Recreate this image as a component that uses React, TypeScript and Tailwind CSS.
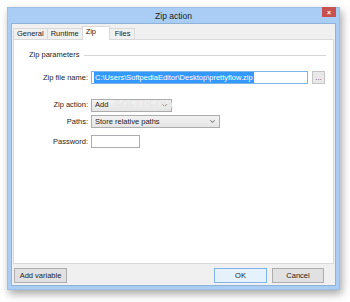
import { ChevronDown } from "lucide-react";

const font = { fontFamily: '"Liberation Sans", Arial, sans-serif' };

function Tab({ label, active }: { label: string; active?: boolean }) {
  if (active) {
    return (
      <div className="h-[14px] -mb-px w-[28px] bg-white border border-b-0 border-[#d9d9d9] z-10 flex items-start pl-[3px] pt-[1px]">
        {label}
      </div>
    );
  }
  return (
    <div className="h-[11px] bg-[#f0f0f0] border border-b-0 border-[#d9d9d9] flex items-center px-[3px] -mr-px">
      {label}
    </div>
  );
}

function Select({ value, width }: { value: string; width: string }) {
  return (
    <div
      className={`${width} h-[13px] border border-[#acacac] bg-gradient-to-b from-[#f2f2f2] to-[#e5e5e5] flex items-center justify-between pl-[3px] pr-[3px]`}
    >
      <span>{value}</span>
      <ChevronDown size={7} strokeWidth={3} className="text-[#444]" />
    </div>
  );
}

export default function App() {
  return (
    <div
      className="w-[350px] h-[302px] bg-white pl-[7px] pt-[7px] text-[7.5px] text-[#1e1e1e] leading-none"
      style={font}
    >
      <div className="w-[333px] h-[283px] bg-[#a9cdf4] border border-[#9cbfe6] shadow-[2px_4px_8px_rgba(0,0,0,0.35)] flex flex-col">
        {/* title bar */}
        <div className="h-[15px] relative flex items-center justify-center">
          <span className="text-[8.5px] text-[#1a1a1a] mt-[2px]">Zip action</span>
          <div className="absolute right-[3px] top-[-1px] w-[14px] h-[10px] bg-[#c75050] flex items-center justify-center text-white text-[7px] font-bold">
            ×
          </div>
        </div>

        <div className="flex-1 mx-[3px] mb-[3px] bg-[#f0f0f0] border border-[#8fb2d9] flex flex-col">
          {/* tabs */}
          <div className="flex items-end h-[14px] mt-px ml-px">
            <Tab label="General" />
            <Tab label="Runtime" />
            <Tab label="Zip" active />
            <div className="h-[11px] bg-[#f0f0f0] border border-b-0 border-[#d9d9d9] flex items-center pl-[5px] w-[26px] -ml-px">
              Files
            </div>
          </div>

          {/* panel */}
          <div className="ml-px w-[321px] h-[225px] bg-white border border-[#d9d9d9] pt-[10px] relative">
            <div className="flex items-center pl-[15px] pr-[7px] h-[10px]">
              <span>Zip parameters</span>
              <div className="flex-1 h-px bg-[#d5d5d5] ml-[5px]" />
            </div>

            <div className="flex items-center mt-[11px] h-[13px]">
              <div className="w-[74px] text-right">Zip file name:</div>
              <div className="ml-[3px] w-[217px] h-[13px] border border-[#7eb4ea] bg-white flex items-center pl-[2px]">
                <span className="bg-[#3399ff] text-white px-px py-[2px]">
                  C:\Users\SoftpediaEditor\Desktop\prettyflow.zip
                </span>
              </div>
              <div className="ml-[4px] w-[13px] h-[13px] border border-[#c4c4c4] bg-[#e9e9e9] flex items-center justify-center text-[#444]">
                ...
              </div>
            </div>

            <div className="flex items-center mt-[15px] h-[12px]">
              <div className="w-[74px] text-right">Zip action:</div>
              <div className="ml-[3px]">
                <Select value="Add" width="w-[81px]" />
              </div>
              <span className="ml-[-58px] text-[10px] font-bold tracking-wide text-[#e8e8e8] select-none">
                SOFTPEDIA
              </span>
            </div>

            <div className="flex items-center mt-[4px] h-[13px]">
              <div className="w-[74px] text-right">Paths:</div>
              <div className="ml-[3px]">
                <Select value="Store relative paths" width="w-[129px]" />
              </div>
            </div>

            <div className="flex items-center mt-[7px] h-[13px]">
              <div className="w-[74px] text-right">Password:</div>
              <div className="ml-[3px] w-[49px] h-[13px] border border-[#abadb3] bg-white" />
            </div>
          </div>

          {/* bottom buttons */}
          <div className="flex items-center mt-[4px] pl-[2px] pr-[11px]">
            <button className="w-[53px] h-[15px] border border-[#adadad] bg-[#e1e1e1] text-[7.5px]">
              Add variable
            </button>
            <div className="flex-1" />
            <button className="w-[53px] h-[15px] border border-[#7eb4ea] bg-[#e5f1fb] text-[7.5px]">
              OK
            </button>
            <button className="ml-[5px] w-[52px] h-[15px] border border-[#adadad] bg-[#e1e1e1] text-[7.5px]">
              Cancel
            </button>
          </div>
        </div>
      </div>
    </div>
  );
}
